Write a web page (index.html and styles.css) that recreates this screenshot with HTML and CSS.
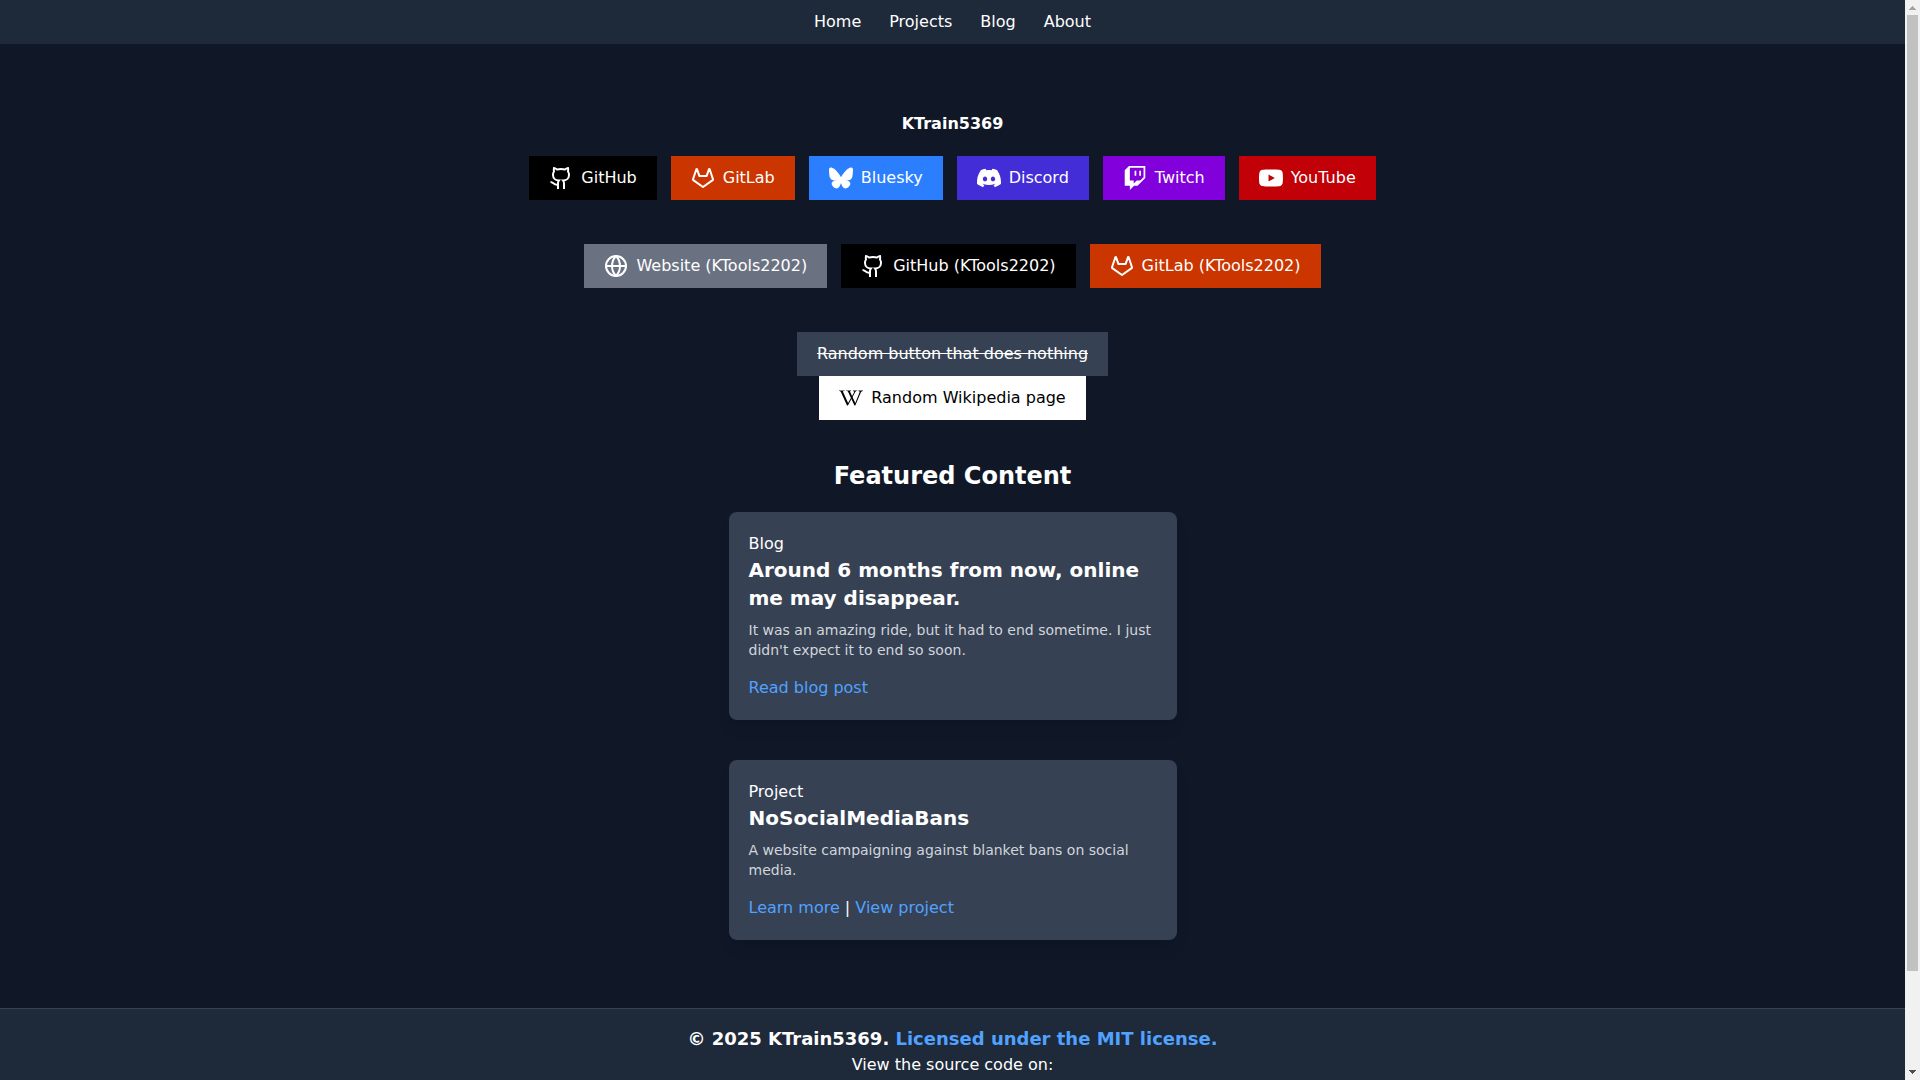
FILE: index.html
```html
<!DOCTYPE html>
<html lang="en">
<head>
    <meta charset="UTF-8">
    <meta name="viewport" content="width=device-width, initial-scale=1.0">
    <title>KTrain5369</title>
    <link rel="stylesheet" href="styles.css">
</head>
<body>
    <svg class="sprite" aria-hidden="true">
        <symbol id="github" viewBox="0 0 24 24" fill="none" stroke="currentColor" stroke-width="2">
            <path d="M15 23v-5a4.8 4.8 0 0 0-1-3.5c3 0 6-2 6-5.5.08-1.25-.27-2.48-1-3.5.28-1.15.28-2.35 0-3.5 0 0-1 0-3 1.5-2.64-.5-5.36-.5-8 0C6 2 5 2 5 2c-.3 1.15-.3 2.35 0 3.5A5.403 5.403 0 0 0 4 9c0 3.5 3 5.5 6 5.5-.39.49-.68 1.05-.85 1.65-.17.6-.22 1.23-.15 1.85v5"/>
            <path d="M9.500 18.500c-4.51 1.500-5-2.500-8-2.500"/>
        </symbol>
        <symbol id="gitlab" viewBox="0 0 24 24" fill="none" stroke="currentColor" stroke-width="2" stroke-linecap="round" stroke-linejoin="round">
            <path d="m22 13.29-3.33-10a.42.42 0 0 0-.14-.18.38.38 0 0 0-.22-.11.39.39 0 0 0-.23.07.42.42 0 0 0-.14.18l-2.26 6.67H8.32L6.1 3.26a.42.42 0 0 0-.1-.18.38.38 0 0 0-.26-.08.39.39 0 0 0-.23.07.42.42 0 0 0-.14.18L2 13.29a.74.74 0 0 0 .27.83L12 21l9.69-6.88a.71.71 0 0 0 .31-.83Z"/>
        </symbol>
        <symbol id="globe" viewBox="0 0 24 24" fill="none" stroke="currentColor" stroke-width="2" stroke-linecap="round" stroke-linejoin="round">
            <circle cx="12" cy="12" r="10"/>
            <path d="M12 2a14.5 14.5 0 0 0 0 20 14.5 14.5 0 0 0 0-20"/>
            <path d="M2 12h20"/>
        </symbol>
        <symbol id="bluesky" viewBox="0 0 24 24" fill="currentColor">
            <path d="M5.202 2.857C7.954 4.922 10.913 9.11 12 11.358c1.087-2.247 4.046-6.436 6.798-8.501C20.783 1.366 24 .213 24 3.883c0 .732-.42 6.156-.667 7.037-.856 3.061-3.978 3.842-6.755 3.37 4.854.826 6.089 3.562 3.422 6.299-5.065 5.196-7.28-1.304-7.847-2.97-.104-.305-.152-.448-.153-.327 0-.121-.05.022-.153.327-.568 1.666-2.782 8.166-7.847 2.97-2.667-2.737-1.432-5.473 3.422-6.3-2.777.473-5.899-.308-6.755-3.369C.42 10.04 0 4.615 0 3.883c0-3.67 3.217-2.517 5.202-1.026"/>
        </symbol>
        <symbol id="discord" viewBox="0 0 24 24" fill="currentColor">
            <path d="M20.317 4.3698a19.7913 19.7913 0 00-4.8851-1.5152.0741.0741 0 00-.0785.0371c-.211.3753-.4447.8648-.6083 1.2495-1.8447-.2762-3.68-.2762-5.4868 0-.1636-.3933-.4058-.8742-.6177-1.2495a.077.077 0 00-.0785-.037 19.7363 19.7363 0 00-4.8852 1.515.0699.0699 0 00-.0321.0277C.5334 9.0458-.319 13.5799.0992 18.0578a.0824.0824 0 00.0312.0561c2.0528 1.5076 4.0413 2.4228 5.9929 3.0294a.0777.0777 0 00.0842-.0276c.4616-.6304.8731-1.2952 1.226-1.9942a.076.076 0 00-.0416-.1057c-.6528-.2476-1.2743-.5495-1.8722-.8923a.077.077 0 01-.0076-.1277c.1258-.0943.2517-.1923.3718-.2914a.0743.0743 0 01.0776-.0105c3.9278 1.7933 8.18 1.7933 12.0614 0a.0739.0739 0 01.0785.0095c.1202.099.246.1981.3728.2924a.077.077 0 01-.0066.1276 12.2986 12.2986 0 01-1.873.8914.0766.0766 0 00-.0407.1067c.3604.698.7719 1.3628 1.225 1.9932a.076.076 0 00.0842.0286c1.961-.6067 3.9495-1.5219 6.0023-3.0294a.077.077 0 00.0313-.0552c.5004-5.177-.8382-9.6739-3.5485-13.6604a.061.061 0 00-.0312-.0286zM8.02 15.3312c-1.1825 0-2.1569-1.0857-2.1569-2.419 0-1.3332.9555-2.4189 2.157-2.4189 1.2108 0 2.1757 1.0952 2.1568 2.419 0 1.3332-.9555 2.4189-2.1569 2.4189zm7.9748 0c-1.1825 0-2.1569-1.0857-2.1569-2.419 0-1.3332.9554-2.4189 2.1569-2.4189 1.2108 0 2.1757 1.0952 2.1568 2.419 0 1.3332-.946 2.4189-2.1568 2.4189Z"/>
        </symbol>
        <symbol id="twitch" viewBox="0 0 24 24" fill="currentColor">
            <path d="M11.571 4.714h1.715v5.143H11.57zm4.715 0H18v5.143h-1.714zM6 0L1.714 4.286v15.428h5.143V24l4.286-4.286h3.428L22.286 12V0zm14.571 11.143l-3.428 3.428h-3.429l-3 3v-3H6.857V1.714h13.714Z"/>
        </symbol>
        <symbol id="youtube" viewBox="0 0 24 24" fill="currentColor">
            <path d="M23.498 6.186a3.016 3.016 0 0 0-2.122-2.136C19.505 3.545 12 3.545 12 3.545s-7.505 0-9.377.505A3.017 3.017 0 0 0 .502 6.186C0 8.07 0 12 0 12s0 3.93.502 5.814a3.016 3.016 0 0 0 2.122 2.136c1.871.505 9.376.505 9.376.505s7.505 0 9.377-.505a3.015 3.015 0 0 0 2.122-2.136C24 15.93 24 12 24 12s0-3.93-.502-5.814zM9.545 15.568V8.432L15.818 12l-6.273 3.568z"/>
        </symbol>
        <symbol id="wikipedia" viewBox="0 0 24 24" fill="currentColor">
            <path d="M0 4.400h5.500v.6C4.200 5.100 3.800 5.400 4.200 6.200L9.100 16.900 15 6.500C15.400 5.500 15.100 5.100 13.900 5v-.6h4.200V5c-1 .1-1.500.4-2.100 1.400L9.200 18.900c-.5.9-1 .9-1.400 0L2 6.300C1.500 5.300 1.100 5 0 5Z"/>
            <path d="M7.300 4.400h4.900V5c-1.100.1-1.300.4-.9 1.300l5 10.600L20.500 6.600c.4-1.100.1-1.500-1.200-1.600v-.6H24V5c-1.200.1-1.800.6-2.200 1.600L16.500 18.900c-.4.9-.9.9-1.300 0L9.400 6.500C8.900 5.400 8.600 5.100 7.300 5Z"/>
        </symbol>
    </svg>

    <div class="page">
        <nav class="navbar">
            <a href="#">Home</a>
            <a href="#">Projects</a>
            <a href="#">Blog</a>
            <a href="#">About</a>
        </nav>

        <main class="content">
            <h1 class="title">KTrain5369</h1>
            <div class="links">
                <a class="btn black" href="#"><svg class="icon"><use href="#github"/></svg>GitHub</a>
                <a class="btn orange" href="#"><svg class="icon"><use href="#gitlab"/></svg>GitLab</a>
                <a class="btn blue" href="#"><svg class="icon"><use href="#bluesky"/></svg>Bluesky</a>
                <a class="btn indigo" href="#"><svg class="icon"><use href="#discord"/></svg>Discord</a>
                <a class="btn purple" href="#"><svg class="icon"><use href="#twitch"/></svg>Twitch</a>
                <a class="btn red" href="#"><svg class="icon"><use href="#youtube"/></svg>YouTube</a>
            </div>
            <div class="links">
                <a class="btn gray" href="#"><svg class="icon"><use href="#globe"/></svg>Website (KTools2202)</a>
                <a class="btn black" href="#"><svg class="icon"><use href="#github"/></svg>GitHub (KTools2202)</a>
                <a class="btn orange" href="#"><svg class="icon"><use href="#gitlab"/></svg>GitLab (KTools2202)</a>
            </div>
            <div class="random">
                <button class="btn nothing" type="button">Random button that does nothing</button>
                <a class="btn white" href="#"><svg class="icon"><use href="#wikipedia"/></svg>Random Wikipedia page</a>
            </div>

            <h2 class="featured">Featured Content</h2>
            <div class="cards">
                <article class="card">
                    <p>Blog</p>
                    <h3>Around 6 months from now, online me may disappear.</h3>
                    <p class="desc">It was an amazing ride, but it had to end sometime. I just didn't expect it to end so soon.</p>
                    <p><a href="#">Read blog post</a></p>
                </article>
                <article class="card">
                    <p>Project</p>
                    <h3>NoSocialMediaBans</h3>
                    <p class="desc">A website campaigning against blanket bans on social media.</p>
                    <p><a href="#">Learn more</a> | <a href="#">View project</a></p>
                </article>
            </div>
        </main>

        <footer class="footer">
            <p class="copyright">© 2025 KTrain5369. <a href="#">Licensed under the MIT license.</a></p>
            <p>View the source code on:</p>
        </footer>
    </div>

    <div class="scrollbar" aria-hidden="true">
        <svg class="arrow up" viewBox="0 0 15 15"><path d="M7 6h1v1h1v1h1v1h1v1H4V9h1V8h1V7h1Z"/></svg>
        <div class="track"><div class="thumb"></div></div>
        <svg class="arrow down" viewBox="0 0 15 15"><path d="M4 5h7v1h-1v1H9v1H8v1H7V8H6V7H5V6H4Z"/></svg>
    </div>
</body>
</html>
```

FILE: styles.css
```css
* {
    box-sizing: border-box;
    margin: 0;
    padding: 0;
}
body {
    display: flex;
    height: 100vh;
    overflow: hidden;
    background-color: #101828;
    color: #fff;
    font-family: "DejaVu Sans", sans-serif;
    font-size: 16px;
    line-height: 24px;
}
a {
    color: #51a2ff;
    text-decoration: none;
}
a:hover {
    text-decoration: underline;
}
.sprite {
    display: none;
}
.page {
    flex: 1;
    overflow-y: auto;
    scrollbar-width: none;
}
.navbar {
    display: flex;
    justify-content: center;
    gap: 28px;
    padding: 10px;
    background-color: #1e2939;
}
.navbar a {
    color: #fff;
}
.content {
    display: flex;
    flex-direction: column;
    align-items: center;
    padding: 68px 16px;
}
.title {
    font-size: 16px;
    margin-bottom: 20px;
}
.links {
    display: flex;
    flex-wrap: wrap;
    justify-content: center;
    gap: 14px;
    margin-bottom: 44px;
}
.btn {
    display: inline-flex;
    align-items: center;
    gap: 8px;
    padding: 10px 20px;
    border: none;
    color: #fff;
    font: inherit;
    cursor: pointer;
}
.icon {
    width: 24px;
    height: 24px;
}
.black {
    background-color: #000;
}
.orange {
    background-color: #ca3500;
}
.blue {
    background-color: #2b7fff;
}
.indigo {
    background-color: #432dd7;
}
.purple {
    background-color: #8200db;
}
.red {
    background-color: #c10007;
}
.gray {
    background-color: #6a7282;
}
.white {
    background-color: #fff;
    color: #000;
}
.nothing {
    background-color: #364153;
    text-decoration: line-through;
}
.random {
    display: flex;
    flex-direction: column;
    align-items: center;
}
.featured {
    font-size: 24px;
    line-height: 32px;
    margin: 40px 0 20px;
}
.cards {
    display: flex;
    flex-direction: column;
    gap: 40px;
    width: 100%;
    max-width: 448px;
}
.card {
    padding: 20px;
    border-radius: 8px;
    background-color: #364153;
    box-shadow: 0 10px 15px -3px rgba(0, 0, 0, 0.1), 0 4px 6px -4px rgba(0, 0, 0, 0.1);
}
.card h3 {
    font-size: 20px;
    line-height: 28px;
}
.card .desc {
    color: #d1d5dc;
    font-size: 14px;
    line-height: 20px;
    margin: 8px 0 16px;
}
.footer {
    padding: 16px 16px 112px;
    border-top: 1px solid #364153;
    background-color: #1e2939;
    text-align: center;
}
.copyright {
    font-size: 18px;
    font-weight: bold;
    line-height: 28px;
}
.scrollbar {
    display: flex;
    flex-direction: column;
    width: 15px;
    background-color: #f1f1f1;
}
.arrow {
    width: 15px;
    height: 15px;
}
.up {
    fill: #a3a3a3;
}
.down {
    fill: #505050;
}
.track {
    flex: 1;
    padding: 0 2px;
}
.thumb {
    height: 91%;
    background-color: #c1c1c1;
}
```
